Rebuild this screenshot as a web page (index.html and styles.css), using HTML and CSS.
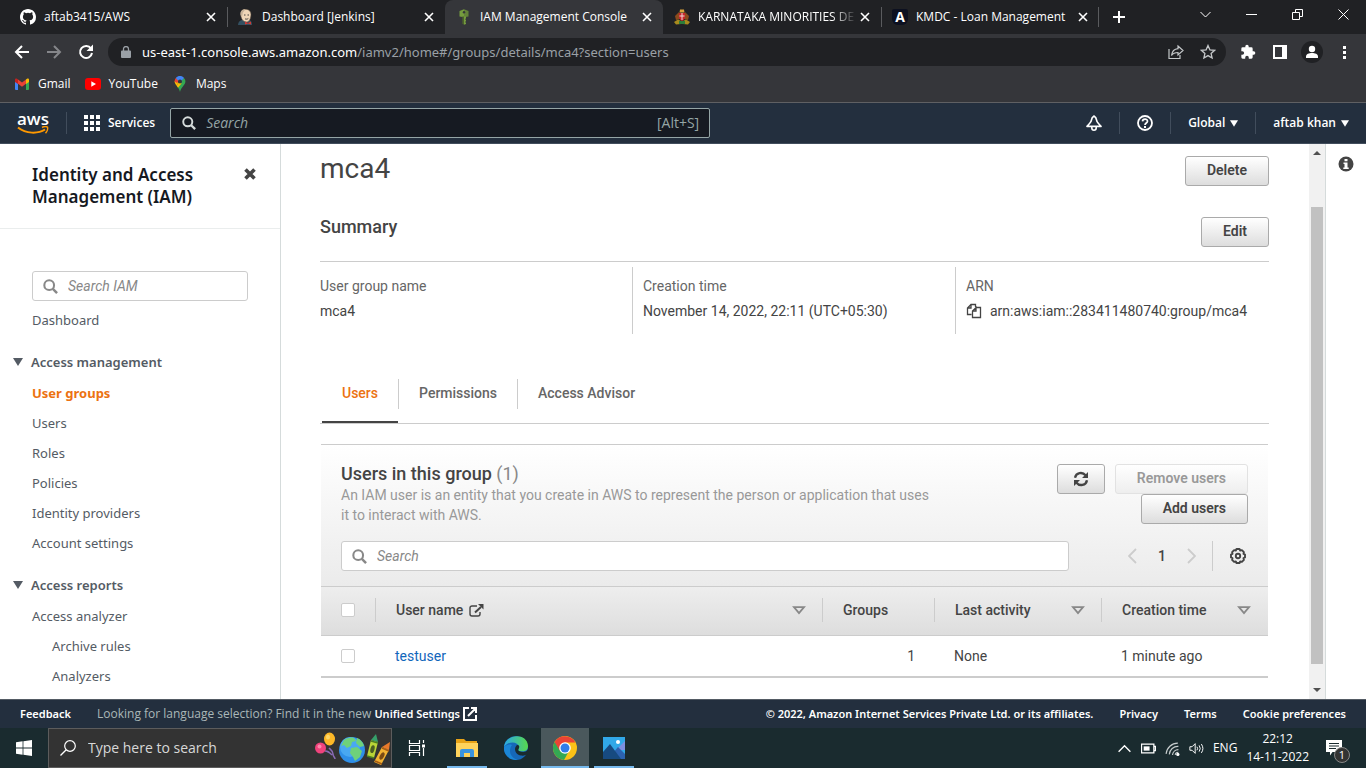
FILE: index.html
```html
<!DOCTYPE html>
<html lang="en">
<head>
<meta charset="utf-8">
<title>IAM Management Console</title>
<link rel="stylesheet" href="styles.css">
</head>
<body>
<svg class="sprite" aria-hidden="true">
  <symbol id="i-close" viewBox="0 0 10 10"><path d="M1 1l8 8M9 1L1 9" fill="none" stroke="currentColor" stroke-width="1.6"/></symbol>
  <symbol id="i-search" viewBox="0 0 16 16"><circle cx="6.6" cy="6.6" r="5.2" fill="none" stroke="currentColor" stroke-width="2.2"/><path d="M10.5 10.5L15 15" stroke="currentColor" stroke-width="2.6"/></symbol>
  <symbol id="i-down" viewBox="0 0 10 8"><path d="M0 0h10L5 8z" fill="currentColor"/></symbol>
  <symbol id="i-sort" viewBox="0 0 14 9"><path d="M2 1.2h10L7 7z" fill="none" stroke="currentColor" stroke-width="1.8"/></symbol>
</svg>

<div class="tabstrip">
  <div class="tab">
    <svg class="favicon" viewBox="0 0 16 16"><path fill="#fff" d="M8 0C3.58 0 0 3.58 0 8c0 3.54 2.29 6.53 5.47 7.59.4.07.55-.17.55-.38 0-.19-.01-.82-.01-1.49-2.01.37-2.53-.49-2.69-.94-.09-.23-.48-.94-.82-1.13-.28-.15-.68-.52-.01-.53.63-.01 1.08.58 1.23.82.72 1.21 1.87.87 2.33.66.07-.52.28-.87.51-1.07-1.78-.2-3.64-.89-3.64-3.95 0-.87.31-1.59.82-2.15-.08-.2-.36-1.02.08-2.12 0 0 .67-.21 2.2.82a7.6 7.6 0 0 1 4 0c1.53-1.04 2.2-.82 2.2-.82.44 1.1.16 1.92.08 2.12.51.56.82 1.27.82 2.15 0 3.07-1.87 3.75-3.65 3.95.29.25.54.73.54 1.48 0 1.07-.01 1.93-.01 2.2 0 .21.15.46.55.38A8 8 0 0 0 16 8c0-4.42-3.58-8-8-8z"/></svg>
    <span class="tab-title">aftab3415/AWS</span>
    <button class="tab-close" aria-label="Close tab"><svg><use href="#i-close"/></svg></button>
  </div>
  <div class="tab divided">
    <svg class="favicon" viewBox="0 0 16 16"><path d="M0 16c0-3 2-4.500 4-5h7c2 .5 3 2 3 5z" fill="#335061"/><path d="M2.500 5c0-3 2-4.800 5.200-4.800S13 2.500 13 5.200c0 4-1.500 7.800-4.700 7.800S3 10 2.500 5z" fill="#f0d6b7" stroke="#4a4038" stroke-width=".6"/><path d="M2.600 6c-.5-4 1.500-5.800 4.900-5.800L5 3.500 4 8z" fill="#c9b49a"/><path d="M6 6h1.500M9.500 6H11M7 9.800c1 .6 2.500.4 3.300-.3" stroke="#333" stroke-width=".9" fill="none"/><path d="M7 12.500l3 1.500 3-1.500v3l-3-1-3 1z" fill="#d33833"/></svg>
    <span class="tab-title">Dashboard [Jenkins]</span>
    <button class="tab-close" aria-label="Close tab"><svg><use href="#i-close"/></svg></button>
  </div>
  <div class="tab active">
    <svg class="favicon" viewBox="0 0 16 16"><path d="M3.500 2L8 .3v8L3.500 7.500z" fill="#759c3e"/><path d="M12.500 2L8 .3v8l4.500-.8z" fill="#648339"/><path d="M6.300 7.500H8v8.300l-1.700-1z" fill="#4b612c"/><path d="M8 7.500h2v1.800l-.8.900.8.900v1l-.8.900.8.900v1L8 15.800z" fill="#759c3e"/><circle cx="8" cy="3.200" r="1.200" fill="#35363a"/></svg>
    <span class="tab-title">IAM Management Console</span>
    <button class="tab-close" aria-label="Close tab"><svg><use href="#i-close"/></svg></button>
  </div>
  <div class="tab">
    <svg class="favicon" viewBox="0 0 16 16"><path d="M6 .5h4l.5 3h-5z" fill="#d8a13a"/><path d="M1 7l4-4 2 4-1 3-4 1zM15 7l-4-4-2 4 1 3 4 1z" fill="#8c4a1c"/><path d="M5 4h6v4c0 2-1.500 3.500-3 4-1.500-.5-3-2-3-4z" fill="#c8252c"/><path d="M8 4v7M5.500 7h5" stroke="#f0d8d0" stroke-width="1"/><path d="M0 13l4-2.500 3 1.500v3l-5 .5zM16 13l-4-2.500L9 12v3l5 .5z" fill="#a88a1d"/><path d="M5 12h6v3H5z" fill="#2d7d3a"/></svg>
    <span class="tab-title faded">KARNATAKA MINORITIES DE</span>
    <button class="tab-close" aria-label="Close tab"><svg><use href="#i-close"/></svg></button>
  </div>
  <div class="tab divided last">
    <span class="favicon angular">A</span>
    <span class="tab-title">KMDC - Loan Management</span>
    <button class="tab-close" aria-label="Close tab"><svg><use href="#i-close"/></svg></button>
  </div>
  <button class="new-tab" aria-label="New tab"><svg viewBox="0 0 12 12"><path d="M6 0v12M0 6h12" stroke="currentColor" stroke-width="2"/></svg></button>
  <div class="window-controls">
    <button aria-label="Search tabs"><svg viewBox="0 0 11 11"><path d="M.5 3l5 5 5-5" fill="none" stroke="currentColor"/></svg></button>
    <button aria-label="Minimize"><svg viewBox="0 0 11 11"><path d="M0 5.500h11" stroke="currentColor"/></svg></button>
    <button aria-label="Restore"><svg viewBox="0 0 11 11"><path d="M.5 3.500h7v7h-7zM3.500 3.500v-3h7v7h-3" fill="none" stroke="currentColor"/></svg></button>
    <button aria-label="Close window"><svg viewBox="0 0 11 11"><path d="M.5.5l10 10M10.500.5l-10 10" stroke="currentColor"/></svg></button>
  </div>
</div>

<div class="toolbar">
  <div class="nav-buttons">
    <button aria-label="Back"><svg viewBox="0 0 16 16"><path d="M15 8H2M8 2L2 8l6 6" fill="none" stroke="currentColor" stroke-width="2"/></svg></button>
    <button aria-label="Forward" class="dim"><svg viewBox="0 0 16 16"><path d="M1 8h13M8 2l6 6-6 6" fill="none" stroke="currentColor" stroke-width="2"/></svg></button>
    <button aria-label="Reload"><svg viewBox="0 0 16 16"><path d="M13 4.500A6 6 0 1 0 14 9" fill="none" stroke="currentColor" stroke-width="2"/><path d="M15 .5V7H8.500z" fill="currentColor"/></svg></button>
  </div>
  <div class="omnibox">
    <svg class="lock" viewBox="0 0 10 12"><path d="M1 4.500h8a1 1 0 0 1 1 1V11a1 1 0 0 1-1 1H1a1 1 0 0 1-1-1V5.500a1 1 0 0 1 1-1z" fill="currentColor"/><path d="M2.500 5V3a2.500 2.500 0 0 1 5 0v2" fill="none" stroke="currentColor" stroke-width="1.300"/></svg>
    <span class="url"><b>us-east-1.console.aws.amazon.com</b>/iamv2/home#/groups/details/mca4?section=users</span>
    <button aria-label="Share"><svg viewBox="0 0 16 16"><path d="M1 5v9.500h11V11" fill="none" stroke="currentColor" stroke-width="1.200"/><path d="M10 2l5 4.500-5 4.500V8.500c-3 0-5 .8-6.500 3C4 8 6 5 10 4.700z" fill="none" stroke="currentColor" stroke-width="1.200"/></svg></button>
    <button aria-label="Bookmark"><svg viewBox="0 0 16 16"><path d="M8 1.500l1.900 4.300 4.700.5-3.500 3.100 1 4.600L8 11.600 3.900 14l1-4.600L1.400 6.300l4.700-.5z" fill="none" stroke="currentColor" stroke-width="1.300"/></svg></button>
  </div>
  <div class="toolbar-actions">
    <button aria-label="Extensions"><svg viewBox="0 0 24 24"><path fill="currentColor" d="M20.500 11H19V7a2 2 0 0 0-2-2h-4V3.500a2.500 2.500 0 0 0-5 0V5H4a2 2 0 0 0-2 2v3.800h1.500a2.700 2.700 0 0 1 0 5.400H2V20a2 2 0 0 0 2 2h3.800v-1.500a2.700 2.700 0 0 1 5.400 0V22H17a2 2 0 0 0 2-2v-4h1.500a2.500 2.500 0 0 0 0-5z"/></svg></button>
    <button aria-label="Side panel"><svg viewBox="0 0 16 16"><path fill="currentColor" fill-rule="evenodd" d="M1 1h14v14H1zM3 3v10h7V3z"/></svg></button>
    <button aria-label="Profile" class="profile"><svg viewBox="0 0 16 16"><circle cx="8" cy="5" r="3.200" fill="currentColor"/><path d="M2 14V12.500c0-2.500 3-3.500 6-3.500s6 1 6 3.500V14z" fill="currentColor"/></svg></button>
    <button aria-label="Menu"><svg viewBox="0 0 16 16"><path fill="currentColor" d="M7 2h3v3H7zM7 7h3v3H7zM7 12h3v3H7z"/></svg></button>
  </div>
</div>

<div class="bookmarks">
  <a href="#"><svg viewBox="0 0 16 16"><path d="M1 3.500l3 2V14H2a1 1 0 0 1-1-1z" fill="#4285f4"/><path d="M15 3.500l-3 2V14h2a1 1 0 0 0 1-1z" fill="#34a853"/><path d="M4 3.500l4 3 4-3v4.200l-4 3-4-3z" fill="#ea4335"/><path d="M12 3.500l1-.8c1-.6 2 0 2 1V6l-3 2z" fill="#fbbc04"/><path d="M4 3.500l-1-.8c-1-.6-2 0-2 1V6l3 2z" fill="#c5221f"/></svg>Gmail</a>
  <a href="#"><svg viewBox="0 0 16 16"><rect y="2" width="16" height="12" rx="3" fill="#f00"/><path d="M6.300 5.300v5.400L11 8z" fill="#fff"/></svg>YouTube</a>
  <a href="#"><svg viewBox="0 0 16 16"><path d="M8 16c-.6-3-2-4.500-3.500-6.500L11.800 2C13 3 13.400 4.300 13.400 5.500 13.400 9 9 11 8 16z" fill="#34a853"/><path d="M4.500 9.500C3 7.500 2.500 6.500 2.600 5l4 1.500z" fill="#fbbc04"/><path d="M4.500 9.500l3.200-4L9.500 7.500 6 11.700z" fill="#fbbc04"/><path d="M2.600 5.500c0-1.500.6-2.700 1.500-3.800L7 4.500 5 7z" fill="#ea4335"/><path d="M3.900 1.900C6-.6 10-.6 12 2L8.500 6 5.500 4z" fill="#4285f4"/><circle cx="8" cy="5.400" r="2" fill="#35363a"/></svg>Maps</a>
</div>

<header class="aws-nav">
  <a href="#" class="aws-logo" aria-label="AWS home"><span>aws</span><svg viewBox="0 0 32 9"><path d="M1 1.500c8 6.500 20 6.500 27 2" fill="none" stroke="#f90" stroke-width="2"/><path d="M25 1.500c2-1 4.500-1 5.500-.3.500 1.500-.5 4.500-2 6" fill="none" stroke="#f90" stroke-width="1.500"/></svg></a>
  <button class="services"><svg viewBox="0 0 16 16"><path fill="currentColor" d="M0 0h4v4H0zM6 0h4v4H6zM12 0h4v4h-4zM0 6h4v4H0zM6 6h4v4H6zM12 6h4v4h-4zM0 12h4v4H0zM6 12h4v4H6zM12 12h4v4h-4z"/></svg>Services</button>
  <label class="aws-search"><svg><use href="#i-search"/></svg><input type="text" placeholder="Search" aria-label="Search services"><span>[Alt+S]</span></label>
  <div class="aws-right">
    <button class="icon-only" aria-label="Notifications"><svg viewBox="0 0 16 16"><path d="M8 1c1.700.8 2.400 2.300 2.700 4.500.2 1.500.5 2 4.300 5.800H1c3.800-3.800 4.100-4.300 4.300-5.800C5.600 3.300 6.300 1.800 8 1z" fill="none" stroke="currentColor" stroke-width="1.700" stroke-linejoin="round"/><path d="M5.800 12v1a2.200 2.200 0 0 0 4.400 0v-1" fill="none" stroke="currentColor" stroke-width="1.600"/></svg></button>
    <button class="icon-only" aria-label="Help"><svg viewBox="0 0 16 16"><circle cx="8" cy="8" r="7" fill="none" stroke="currentColor" stroke-width="1.800"/><path d="M5.500 6.400C5.600 3.400 10.500 3.400 10.500 6.200 10.500 8 8 8 8 10" fill="none" stroke="currentColor" stroke-width="1.700"/><path d="M7 11h2v2H7z" fill="currentColor"/></svg></button>
    <button>Global<svg><use href="#i-down"/></svg></button>
    <button>aftab khan<svg><use href="#i-down"/></svg></button>
  </div>
</header>

<div class="workspace">
  <nav class="sidebar" aria-label="IAM">
    <div class="sidebar-head">
      <h2>Identity and Access Management (IAM)</h2>
      <button aria-label="Close navigation"><svg viewBox="0 0 12 12"><path d="M1.500 1.500l9 9M10.500 1.500l-9 9" stroke="currentColor" stroke-width="3.600"/></svg></button>
    </div>
    <div class="sidebar-body">
      <label class="field side-search"><svg><use href="#i-search"/></svg><input type="text" placeholder="Search IAM" aria-label="Search IAM"></label>
      <a href="#" class="side-link">Dashboard</a>
      <button class="side-section"><svg><use href="#i-down"/></svg>Access management</button>
      <a href="#" class="side-link current">User groups</a>
      <a href="#" class="side-link">Users</a>
      <a href="#" class="side-link">Roles</a>
      <a href="#" class="side-link">Policies</a>
      <a href="#" class="side-link">Identity providers</a>
      <a href="#" class="side-link">Account settings</a>
      <button class="side-section"><svg><use href="#i-down"/></svg>Access reports</button>
      <a href="#" class="side-link">Access analyzer</a>
      <a href="#" class="side-link nested">Archive rules</a>
      <a href="#" class="side-link nested">Analyzers</a>
    </div>
  </nav>

  <main class="content">
    <div class="title-row"><h1>mca4</h1><button class="btn">Delete</button></div>
    <div class="summary-row"><h2>Summary</h2><button class="btn">Edit</button></div>
    <dl class="summary">
      <div><dt>User group name</dt><dd>mca4</dd></div>
      <div><dt>Creation time</dt><dd>November 14, 2022, 22:11 (UTC+05:30)</dd></div>
      <div><dt>ARN</dt><dd class="arn"><svg viewBox="0 0 16 16"><path d="M5.500 11.500h-4V5L5 1.500h4.500V4M5 1.500V5H1.500M10.500 4.500h4v10h-8V8L10 4.500V8H6.500" fill="none" stroke="currentColor" stroke-width="1.300"/></svg>arn:aws:iam::283411480740:group/mca4</dd></div>
    </dl>
    <div class="section-tabs" role="tablist">
      <button role="tab" aria-selected="true" class="selected"><span>Users</span></button>
      <button role="tab" aria-selected="false"><span>Permissions</span></button>
      <button role="tab" aria-selected="false"><span>Access Advisor</span></button>
    </div>

    <section class="panel">
      <div class="panel-head">
        <div class="panel-top">
          <div class="panel-text">
            <h2>Users in this group <span>(1)</span></h2>
            <p>An IAM user is an entity that you create in AWS to represent the person or application that uses it to interact with AWS.</p>
          </div>
          <div class="panel-actions">
            <button class="btn refresh" aria-label="Refresh"><svg viewBox="0 0 16 16"><path d="M2 6.800C3 1.500 9.500.5 12.500 4.300M14 9.200C13 14.500 6.500 15.500 3.500 11.700" fill="none" stroke="currentColor" stroke-width="2.300"/><path d="M15 1v6H9zM1 15V9h6z" fill="currentColor"/></svg></button>
            <button class="btn" disabled>Remove users</button>
            <button class="btn">Add users</button>
          </div>
        </div>
        <div class="panel-filter">
          <label class="field"><svg><use href="#i-search"/></svg><input type="text" placeholder="Search" aria-label="Search users"></label>
          <div class="pager">
            <button aria-label="Previous page" class="arrow"><svg viewBox="0 0 9 16"><path d="M8 1L1 8l7 7" fill="none" stroke="currentColor" stroke-width="1.800"/></svg></button>
            <button class="page">1</button>
            <button aria-label="Next page" class="arrow"><svg viewBox="0 0 9 16"><path d="M1 1l7 7-7 7" fill="none" stroke="currentColor" stroke-width="1.800"/></svg></button>
            <button aria-label="Settings" class="settings"><svg viewBox="0 0 16 16"><path d="M6.500 1h3l.7 1.500 1.700-.4 2 2-.4 1.700 1.500.7v3l-1.500.7.4 1.700-2 2-1.700-.4L9.500 15h-3l-.7-1.500-1.700.4-2-2 .4-1.700L1 9.500v-3l1.500-.7-.4-1.700 2-2 1.700.4z" fill="none" stroke="currentColor" stroke-width="1.900" stroke-linejoin="round"/><circle cx="8" cy="8" r="2.200" fill="none" stroke="currentColor" stroke-width="1.900"/></svg></button>
          </div>
        </div>
      </div>
      <table>
        <colgroup><col class="c-check"><col><col class="c-groups"><col class="c-activity"><col class="c-created"></colgroup>
        <thead>
          <tr>
            <th><div class="th"><input type="checkbox" aria-label="Select all"></div></th>
            <th><div class="th">User name<svg class="ext" viewBox="0 0 15 13"><path d="M8 2H3a2 2 0 0 0-2 2v6a2 2 0 0 0 2 2h6a2 2 0 0 0 2-2V8" fill="none" stroke="currentColor" stroke-width="1.400"/><path d="M6 8.500L12 3" stroke="currentColor" stroke-width="2"/><path d="M9 0h5.500v5.500z" fill="currentColor"/></svg><svg class="sort"><use href="#i-sort"/></svg></div></th>
            <th><div class="th">Groups</div></th>
            <th><div class="th">Last activity<svg class="sort"><use href="#i-sort"/></svg></div></th>
            <th><div class="th">Creation time<svg class="sort"><use href="#i-sort"/></svg></div></th>
          </tr>
        </thead>
        <tbody>
          <tr>
            <td><input type="checkbox" aria-label="Select testuser"></td>
            <td><a href="#">testuser</a></td>
            <td class="num">1</td>
            <td>None</td>
            <td>1 minute ago</td>
          </tr>
        </tbody>
      </table>
    </section>
  </main>

  <div class="scrollbar" aria-hidden="true">
    <svg viewBox="0 0 8 4"><path d="M0 4l4-4 4 4z" fill="#505050"/></svg>
    <div class="track"><div class="thumb"></div></div>
    <svg viewBox="0 0 8 4"><path d="M0 0l4 4 4-4z" fill="#505050"/></svg>
  </div>
  <aside class="info-rail"><button aria-label="Info"><svg viewBox="0 0 16 16"><circle cx="8" cy="8" r="7.500" fill="#444"/><path d="M6.500 3h3v2.300h-3zM5.500 6.500h4v5h1.200V13H5.300v-1.500h1.200V8h-1z" fill="#fff"/></svg></button></aside>
</div>

<footer class="aws-footer">
  <a href="#">Feedback</a>
  <p>Looking for language selection? Find it in the new <a href="#">Unified Settings<svg viewBox="0 0 14 14"><path d="M6 1H1v12h12V8M8 1h5v5M13 1L5 9" fill="none" stroke="currentColor" stroke-width="2"/></svg></a></p>
  <span class="copyright">© 2022, Amazon Internet Services Private Ltd. or its affiliates.</span>
  <a href="#">Privacy</a>
  <a href="#">Terms</a>
  <a href="#">Cookie preferences</a>
</footer>

<div class="taskbar">
  <button class="start" aria-label="Start"><svg viewBox="0 0 16 16"><path fill="#fff" d="M0 2.200L6.600 1.300v6.300H0zM7.400 1.200L16 0v7.600H7.400zM0 8.400h6.600v6.300L0 13.800zM7.400 8.400H16V16l-8.600-1.200z"/></svg></button>
  <label class="task-search">
    <svg class="glass" viewBox="0 0 16 16"><circle cx="10" cy="6" r="5.300" fill="none" stroke="#fff" stroke-width="1.200"/><path d="M6.200 9.800L.5 15.500" stroke="#fff" stroke-width="1.300"/></svg>
    <input type="text" placeholder="Type here to search" aria-label="Type here to search">
    <svg class="doodle" viewBox="0 0 76 36">
      <path d="M14 18c2 2 4 3 4 6s2 3 2 5M10 21c3 0 4 1 7 4" fill="none" stroke="#8a6bb5" stroke-width="1.500"/>
      <ellipse cx="14.500" cy="9" rx="5.500" ry="6.500" fill="#fdb827"/><ellipse cx="13" cy="7" rx="2" ry="2.500" fill="#ffd768"/><circle cx="5.500" cy="18" r="5.500" fill="#f0437c"/><circle cx="4.500" cy="16.500" r="2" fill="#ff86ab"/>
      <circle cx="37" cy="20" r="13" fill="#2f8fe8"/><circle cx="35" cy="17" r="10" fill="#49a8f2"/>
      <path d="M29 10c3-2 7-3 10-2l2 3-4 1-1 4-4 2-3-3-3 1zM36 18l6-1 5 4-2 6-5 4-2-4-3-4z" fill="#6ed17a"/><path d="M42 8c3 1 6 4 7 8l-4 1-4-4z" fill="#6ed17a"/>
      <path d="M52 26l4-16 7 2-4 16z" fill="#b9d437"/><path d="M56 10l5-6 2 8z" fill="#36a06a"/><path d="M52 26l7 2M56 11l7 2" stroke="#4a7d22" stroke-width="1.500"/><ellipse cx="57.500" cy="19" rx="2" ry="4" fill="#4a5d22" transform="rotate(15 57 19)"/>
      <path d="M59 32l8-15 7 3-8 15z" fill="#f2b233"/><path d="M67 17l8-5-1 8z" fill="#e8792b"/><path d="M60 31l7 3M67 18l7 3" stroke="#a65c14" stroke-width="1.500"/><ellipse cx="67" cy="26" rx="2" ry="4" fill="#7a4a14" transform="rotate(28 67 26)"/>
    </svg>
  </label>
  <div class="apps">
    <button aria-label="Task view" class="task-view"><svg viewBox="0 0 24 24"><path d="M4.500 4v3.500h10V4M4.500 20v-3.500h10V20M4.500 9.500h10v5h-10zM18.500 4v3M18.500 12v8" fill="none" stroke="#fff" stroke-width="1.200"/><path d="M17 8.500h3v3h-3z" fill="#fff"/></svg></button>
    <button aria-label="File Explorer" class="open"><svg viewBox="0 0 24 24"><path d="M1 3h8l2 2h11v6H1z" fill="#e8a317"/><path d="M1 7h22v14H1z" fill="#ffd35c"/><path d="M5 21v-6q0-2 2-2h10q2 0 2 2v6h-4v-4H9v4z" fill="#3a94e0"/></svg></button>
    <button aria-label="Edge"><svg viewBox="0 0 24 24"><defs><linearGradient id="edge-a" x1="0" x2="1"><stop offset="0" stop-color="#2aa7e8"/><stop offset="1" stop-color="#57d94c"/></linearGradient></defs><circle cx="12" cy="12" r="12" fill="#1668b8"/><path d="M0 11C1-2 23-4 24 10c0 5-4 6-9 5-2-1 0-2 0-4-1-6-11-6-15 0z" fill="url(#edge-a)"/><path d="M15 15c4 2 8 1 9-2v5c-2 1-4 2-7 1.500-4-.5-6-3.500-6-6.500 0-2 1-3 2-4 1.500-.5 3 1 2 3s-1 2 0 3z" fill="#1a2b2f"/><path d="M8 9c-4 5-2 13 6 14.800C5 25-1 18 0 11c2-2 5-3 8-2z" fill="#1b86d6"/></svg></button>
    <button aria-label="Chrome" class="open current"><svg viewBox="0 0 24 24"><circle cx="12" cy="12" r="12" fill="#fbc116"/><path d="M1.600 6A12 12 0 0 0 11 24l5-9-4-3z" fill="#34a853"/><path d="M1.600 6L7 15l5-8.500L22.400 6.500A12 12 0 0 0 1.600 6z" fill="#ea4335"/><circle cx="12" cy="12" r="5.800" fill="#fff"/><circle cx="12" cy="12" r="4.500" fill="#2f7de9"/></svg></button>
    <button aria-label="Photos" class="open"><svg viewBox="0 0 24 24"><path d="M1 1h22v22H1z" fill="#31a8e8"/><path d="M14 14l9-9v9z" fill="#7d8fe0"/><path d="M10 18l6-7 7 7v5H10z" fill="#2c62b0"/><path d="M1 16l7-8 11 15H1z" fill="#174a80"/><circle cx="16" cy="6" r="2" fill="#fff"/></svg></button>
  </div>
  <div class="tray">
    <button aria-label="Hidden icons"><svg viewBox="0 0 14 14"><path d="M1.500 10L7 4.500l5.500 5.500" fill="none" stroke="#fff" stroke-width="1.300"/></svg></button>
    <button aria-label="Battery"><svg viewBox="0 0 14 14"><path d="M.5 3h11.500v8H.500zM12.500 5h1v4h-1" fill="none" stroke="#fff" stroke-width="1.200"/><path d="M2.500 5h5.500v4H2.500z" fill="#fff"/></svg></button>
    <button aria-label="Network"><svg viewBox="0 0 14 14"><path d="M1 12A11 11 0 0 1 12 2M4 12.500A8 8 0 0 1 12.500 5M7 13a5.500 5.500 0 0 1 5.500-5M9.500 13a3 3 0 0 1 3-2.500" fill="none" stroke="#c6cccd" stroke-width="1.100"/><circle cx="12" cy="12.500" r="1.500" fill="#fff"/></svg></button>
    <button aria-label="Volume"><svg viewBox="0 0 17 14"><path d="M1 5h2.500L7 1.500v11L3.500 9H1zM9 5q1.500 2 0 4M11.500 3.500q2.500 3.500 0 7M14 2q3.500 5 0 10" fill="none" stroke="#fff" stroke-width="1.100"/></svg></button>
    <span class="lang">ENG</span>
    <div class="clock"><span>22:12</span><span>14-11-2022</span></div>
    <button aria-label="Notifications" class="notify"><svg viewBox="0 0 16 16"><path d="M0 0h16v12H6.500L4 15.500V12H0z" fill="#fff"/><path d="M3 3.500h10M3 6h10M3 8.500h7" stroke="#1a2b2f"/></svg><span class="badge">1</span></button>
  </div>
</div>
</body>
</html>
```

FILE: styles.css
```css
* { box-sizing: border-box; }
body {
  margin: 0;
  height: 100vh;
  display: flex;
  flex-direction: column;
  overflow: hidden;
  background: #fff;
  color: #444;
  font: 14px/20px Roboto, sans-serif;
}
button {
  margin: 0;
  padding: 0;
  border: 0;
  background: none;
  color: inherit;
  font: inherit;
  display: flex;
  align-items: center;
  justify-content: center;
  flex: none;
}
svg { display: block; flex: none; }
a { color: inherit; text-decoration: none; }
h1, h2, p, dl, dd { margin: 0; }
input[type="text"] {
  min-width: 0;
  flex: 1;
  border: 0;
  padding: 0;
  background: none;
  color: inherit;
  font: inherit;
  outline: 0;
}
.sprite { position: absolute; width: 0; height: 0; }

/* Browser tabs */
.tabstrip, .toolbar, .bookmarks { color: #fff; font: 12px/16px "Open Sans", sans-serif; flex: none; }
.tabstrip { display: flex; height: 34px; padding-left: 9px; background: #202124; }
.tab { display: flex; align-items: center; flex: 0 1 218px; min-width: 0; padding: 0 8px 0 11px; }
.tab.active { background: #35363a; border-radius: 8px 8px 0 0; }
.tab.divided { background: linear-gradient(#5a5b5e, #5a5b5e) left center / 1px 20px no-repeat; }
.tab.last { background: linear-gradient(#5a5b5e, #5a5b5e) left center / 1px 20px no-repeat, linear-gradient(#5a5b5e, #5a5b5e) right center / 1px 20px no-repeat; }
.favicon { width: 16px; height: 16px; }
.angular { background: #0c1020; border-radius: 2px 2px 6px 6px; font: bold 14px/16px "Open Sans", sans-serif; text-align: center; flex: none; }
.tab-title { flex: 1; min-width: 0; margin-left: 8px; white-space: nowrap; overflow: hidden; }
.faded { -webkit-mask-image: linear-gradient(90deg, #000 84%, transparent); mask-image: linear-gradient(90deg, #000 84%, transparent); }
.tab-close { width: 16px; height: 16px; }
.tab-close svg { width: 10px; height: 10px; }
.new-tab { width: 40px; }
.new-tab svg { width: 12px; height: 12px; }
.window-controls { display: flex; margin-left: auto; height: 28px; }
.window-controls button { width: 46px; }
.window-controls svg { width: 11px; height: 11px; }

.toolbar { display: flex; align-items: center; height: 36px; background: #35363a; }
.toolbar svg { width: 16px; height: 16px; }
.nav-buttons { display: flex; gap: 16px; padding: 0 14px; }
.dim { color: #85868a; }
.omnibox { display: flex; align-items: center; flex: 1; min-width: 0; height: 28px; padding: 0 10px 0 13px; border-radius: 14px; background: #202124; color: #9aa0a6; font: 13px/16px "Noto Sans", sans-serif; }
.omnibox button { margin-left: 16px; color: #c4c7c9; }
.omnibox .lock { width: 10px; height: 12px; margin-right: 11px; }
.url { flex: 1; min-width: 0; white-space: nowrap; overflow: hidden; }
.url b { color: #fff; font-weight: 400; }
.toolbar-actions { display: flex; align-items: center; gap: 16px; padding: 0 14px; }
.toolbar-actions button { width: 16px; }
.toolbar-actions .profile { width: 22px; height: 22px; margin: 0 -3px; border-radius: 11px; background: #202124; }
.bookmarks { display: flex; gap: 14px; height: 33px; padding: 0 14px 4px; align-items: center; background: #35363a; border-bottom: 1px solid #5f6063; }
.bookmarks a { display: flex; align-items: center; gap: 8px; }
.bookmarks svg { width: 16px; height: 16px; }

/* AWS navigation */
.aws-nav { display: flex; align-items: center; flex: none; height: 41px; background: #232f3e; border-bottom: 1px solid #414d5c; color: #fff; font: 600 12px/16px "Open Sans", sans-serif; }
.aws-logo { display: flex; flex-direction: column; align-items: center; width: 66px; font: 600 17px/13px "Open Sans", sans-serif; }
.aws-logo svg { width: 32px; height: 9px; margin-top: 1px; }
.services { gap: 8px; height: 22px; padding: 0 15px 0 17px; border-left: 1px solid #414d5c; }
.services svg { width: 16px; height: 16px; }
.aws-search { display: flex; align-items: center; flex: 0 1 540px; min-width: 0; height: 30px; padding: 0 10px 0 11px; gap: 10px; border: 1px solid #95a5a6; border-radius: 2px; background: #161a22; color: #95a5a6; font-weight: 400; font-size: 14px; }
.aws-search svg { width: 14px; height: 14px; color: #d5dbdb; }
.aws-search input::placeholder { color: #95a5a6; font-style: italic; opacity: 1; }
.aws-right { display: flex; margin-left: auto; }
.aws-right button { height: 22px; gap: 5px; padding: 0 17px; border-left: 1px solid #414d5c; }
.aws-right button:first-child { border-left: 0; }
.aws-right svg { width: 8px; height: 7px; }
.aws-right .icon-only svg { width: 16px; height: 16px; }

/* Workspace */
.workspace { display: flex; flex: 1; min-height: 0; }
.sidebar { flex: none; width: 281px; overflow: hidden; border-right: 1px solid #d5dbdb; font: 13px/30px "Noto Sans", sans-serif; color: #545b64; }
.sidebar-head { display: flex; align-items: flex-start; justify-content: space-between; padding: 20px 24px 20px 32px; border-bottom: 1px solid #eaeded; }
.sidebar-head h2 { width: 180px; color: #16191f; font: 600 17px/22px "Noto Sans", sans-serif; }
.sidebar-head button { margin-top: 4px; color: #444; }
.sidebar-head svg { width: 12px; height: 12px; }
.sidebar-body { display: flex; flex-direction: column; padding: 42px 32px 0; }
.field { display: flex; align-items: center; height: 30px; gap: 10px; padding: 0 10px; border: 1px solid #ccc; border-radius: 3px; background: #fff; font: 14px/20px Roboto, sans-serif; color: #444; }
.field svg { width: 15px; height: 15px; color: #888; }
.field input::placeholder { color: #888; font-style: italic; opacity: 1; }
.side-search { margin-bottom: 4px; }
.side-link.current { color: #ec7211; font-weight: 700; }
.side-link.nested { padding-left: 20px; }
.side-section { justify-content: flex-start; gap: 8px; height: 29px; margin: 12px 0 2px -19px; font-weight: 600; }
.side-section svg { width: 10px; height: 8px; }

.content { flex: 1; min-width: 0; overflow: hidden; padding: 12px 40px 0 39px; }
.title-row, .summary-row { display: flex; justify-content: space-between; align-items: flex-start; }
.title-row { height: 61px; }
h1 { font-size: 28px; line-height: 26px; font-weight: 400; }
.summary-row { height: 44px; }
.content h2 { font-size: 18px; line-height: 20px; font-weight: 500; }
.btn { height: 30px; padding: 0 21px 2px; border: 1px solid #aaa; border-radius: 3px; background: linear-gradient(#fff, #ddd); font-weight: 600; }
.btn:disabled { color: #999; border-color: #e2e2e2; background: linear-gradient(#fff, #eee); }
.summary { display: grid; grid-template-columns: repeat(3, 1fr); gap: 20px; padding: 5px 0; border-top: 1px solid #ccc; }
.summary div { height: 67px; padding-top: 9px; }
.summary div + div { margin-left: -11px; padding-left: 10px; border-left: 1px solid #ccc; }
dt { color: #666; }
dd { margin-top: 5px; white-space: nowrap; }
.arn { display: flex; align-items: center; gap: 8px; }
.arn svg { width: 16px; height: 16px; }
.section-tabs { display: flex; margin-top: 40px; padding-left: 2px; border-bottom: 1px solid #ccc; color: #666; font-weight: 500; }
.section-tabs button { align-items: flex-start; height: 44px; border-bottom: 2px solid transparent; }
.section-tabs span { padding: 4px 20px 6px; border-left: 1px solid #ccc; }
.section-tabs .selected { color: #ec7211; border-color: #444; }
.section-tabs .selected span { border-left: 0; }

.panel { margin: 20px 1px 0; border-top: 1px solid #ccc; }
.panel-head { padding: 19px 20px 15px; background: linear-gradient(#fff, #ebebeb); }
.panel-top { display: flex; justify-content: space-between; align-items: flex-start; }
.panel-text { max-width: 592px; color: #999; }
.panel-text h2 { margin-bottom: 1px; color: #444; }
.panel-text h2 span { color: #888; font-weight: 400; }
.panel-actions { display: flex; flex-wrap: wrap; justify-content: flex-end; column-gap: 10px; width: 200px; }
.refresh { width: 48px; padding: 0; }
.refresh svg { width: 16px; height: 16px; }
.panel-filter { display: flex; align-items: center; margin-top: 16px; }
.panel-filter .field { flex: 1; }
.pager { display: flex; align-items: center; width: 179px; justify-content: flex-end; }
.arrow { color: #ccc; }
.arrow svg { width: 9px; height: 16px; }
.page { width: 50px; font-weight: 500; }
.settings { height: 30px; margin-left: 16px; padding: 0 2px 0 17px; border-left: 1px solid #ccc; }
.settings svg { width: 16px; height: 16px; }

table { width: 100%; table-layout: fixed; border-collapse: separate; border-spacing: 0; border-bottom: 2px solid #ccc; }
.c-check { width: 55px; }
.c-groups { width: 112px; }
.c-activity { width: 167px; }
.c-created { width: 166px; }
thead { background: linear-gradient(#eee, #ddd); }
th { height: 50px; padding: 0 0 2px; border-top: 1px solid #ccc; border-bottom: 1px solid #ccc; font-weight: 500; text-align: left; }
.th { display: flex; align-items: center; height: 24px; padding: 0 17px 0 20px; }
th + th .th { border-left: 1px solid #ccc; margin-left: -1px; }
.ext { width: 15px; height: 13px; margin-left: 6px; }
.sort { width: 14px; height: 9px; margin-left: auto; color: #888; }
td { height: 40px; padding: 0 20px 0 19px; }
td:first-child { padding-left: 20px; }
td a { color: #1166bb; }
.num { text-align: right; }
input[type="checkbox"] { display: block; appearance: none; width: 14px; height: 14px; margin: 0; border: 1px solid #ccc; border-radius: 2px; background: #fff; }

.scrollbar { display: flex; flex-direction: column; align-items: center; flex: none; width: 17px; padding: 7px 0; background: #f1f1f1; border-right: 1px solid #d5dbdb; }
.scrollbar svg { width: 8px; height: 4px; }
.track { flex: 1; margin: 5px 0; padding-top: 47px; }
.thumb { width: 12px; height: 96%; background: #c1c1c1; }
.info-rail { flex: none; width: 40px; padding-top: 12px; }
.info-rail button { width: 100%; }
.info-rail svg { width: 16px; height: 16px; }

.aws-footer { display: flex; align-items: center; flex: none; gap: 26px; height: 29px; padding: 0 20px; background: #232f3e; border-top: 1px solid #545b64; color: #fff; font: 600 11px/16px "Noto Sans", sans-serif; }
.aws-footer p { display: flex; white-space: pre; color: #aab7b8; font: 12px/16px "Open Sans", sans-serif; }
.aws-footer p a { display: flex; align-items: center; gap: 3px; color: #fff; font: 600 11px/16px "Noto Sans", sans-serif; }
.aws-footer svg { width: 14px; height: 14px; }
.copyright { margin-left: auto; }

/* Taskbar */
.taskbar { display: flex; align-items: center; flex: none; height: 40px; background: #1a2b2f; color: #fff; font: 12px/18px "Open Sans", sans-serif; }
.start { width: 48px; height: 40px; }
.start svg { width: 16px; height: 16px; }
.task-search { display: flex; align-items: center; width: 344px; height: 40px; padding: 0 0 0 11px; gap: 12px; border: 1px solid #5c5c5c; background: #333; font-size: 14px; }
.task-search input::placeholder { color: #d8d8d8; opacity: 1; }
.glass { width: 16px; height: 16px; }
.doodle { width: 76px; height: 36px; }
.apps { display: flex; gap: 1px; height: 40px; }
.apps button { width: 48px; border: solid transparent; border-width: 2px 0; }
.apps .task-view { width: 50px; }
.apps svg { width: 24px; height: 24px; }
.apps .open { border-image: linear-gradient(90deg, transparent 4px, #76b9ed 4px, #76b9ed 44px, transparent 44px) 0 0 2 0; }
.apps .current { background: #4a585c; border-image: none; border-bottom-color: #76b9ed; }
.tray { display: flex; align-items: center; gap: 9px; margin-left: auto; padding-right: 24px; }
.tray svg { width: 15px; height: 15px; }
.clock { display: flex; flex-direction: column; align-items: center; }
.notify { position: relative; margin-left: 8px; }
.tray .notify svg { width: 16px; height: 16px; }
.badge { position: absolute; left: 8px; top: 7px; width: 16px; height: 16px; border: 1px solid #888; border-radius: 8px; background: #333; font-size: 11px; line-height: 14px; text-align: center; }
```
